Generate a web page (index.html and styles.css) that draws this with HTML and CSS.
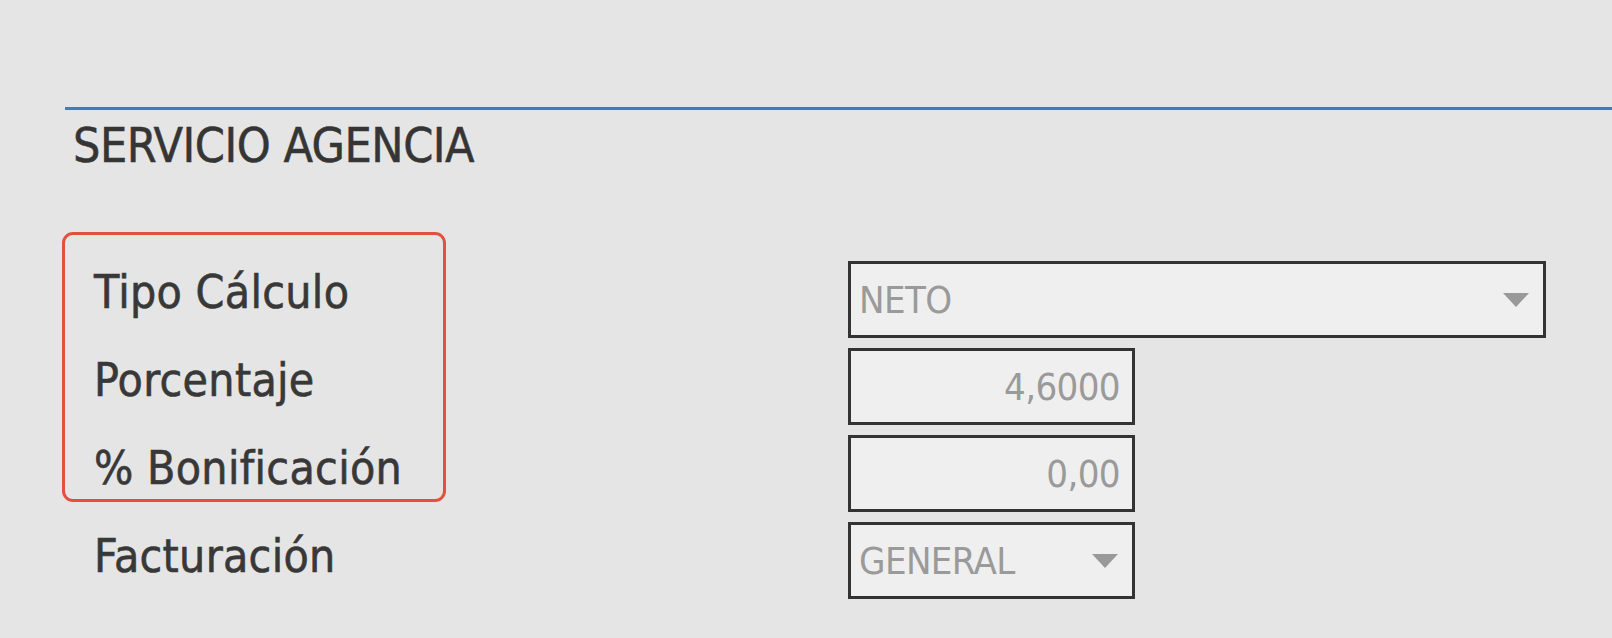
FILE: index.html
```html
<!DOCTYPE html>
<html lang="es">
<head>
<meta charset="utf-8">
<title>Servicio Agencia</title>
<link rel="stylesheet" href="styles.css">
</head>
<body>
<section class="panel">
  <h2 class="panel-title">SERVICIO AGENCIA</h2>
  <div class="form">
    <div class="highlight"></div>
    <div class="label r1">Tipo Cálculo</div>
    <div class="field r1 wide select"><span class="value">NETO</span><span class="arrow"></span></div>
    <div class="label r2">Porcentaje</div>
    <div class="field r2 narrow num"><span class="value">4,6000</span></div>
    <div class="label r3">% Bonificación</div>
    <div class="field r3 narrow num"><span class="value">0,00</span></div>
    <div class="label r4">Facturación</div>
    <div class="field r4 narrow select"><span class="value">GENERAL</span><span class="arrow"></span></div>
  </div>
</section>
</body>
</html>
```
FILE: styles.css
```css
html, body {
  margin: 0;
  padding: 0;
  background: #e5e5e5;
}
body {
  padding-top: 107px;
  font-family: "DejaVu Sans Condensed", "DejaVu Sans", sans-serif;
  font-stretch: condensed;
  color: #383838;
  overflow: hidden;
}
.panel {
  margin-left: 65px;
  border-top: 3px solid #3a7fbe;
}
.panel-title {
  margin: 0 0 0 8px;
  padding-top: 5px;
  font-size: 48px;
  font-weight: normal;
  line-height: 60px;
  color: #353535;
  letter-spacing: -0.5px;
  -webkit-text-stroke: 0.5px #353535;
}
.form {
  margin-top: 86px;
  margin-left: -3px;
  display: grid;
  grid-template-columns: 786px auto;
  grid-template-rows: repeat(4, 77px);
  row-gap: 10px;
  align-items: center;
}
.highlight {
  grid-column: 1;
  grid-row: 1 / 4;
  align-self: stretch;
  justify-self: start;
  width: 378px;
  margin-top: -29px;
  margin-bottom: 10px;
  border: 3px solid #e2503f;
  border-radius: 11px;
}
.label {
  grid-column: 1;
  padding-left: 32px;
  font-size: 46px;
  letter-spacing: 0.3px;
  color: #383838;
  -webkit-text-stroke: 0.6px #383838;
}
.r1 { grid-row: 1; }
.r2 { grid-row: 2; }
.r3 { grid-row: 3; }
.r4 { grid-row: 4; }
.label.r1 { margin-top: -15px; }
.label.r2 { margin-top: -13px; }
.label.r3 { margin-top: -11px; }
.label.r4 { margin-top: -10px; }
.field {
  grid-column: 2;
  box-sizing: border-box;
  height: 77px;
  border: 3px solid #333;
  background: #efefef;
  display: flex;
  align-items: center;
  padding: 0 12px 0 8px;
  font-size: 38px;
  color: #9a9a9a;
}
.wide { width: 698px; }
.narrow { width: 287px; }
.num { justify-content: flex-end; }
.select { justify-content: space-between; padding-right: 14px; }
.value { letter-spacing: -0.6px; }
.arrow {
  width: 0;
  height: 0;
  border-left: 13px solid transparent;
  border-right: 13px solid transparent;
  border-top: 14px solid #999;
}
```
